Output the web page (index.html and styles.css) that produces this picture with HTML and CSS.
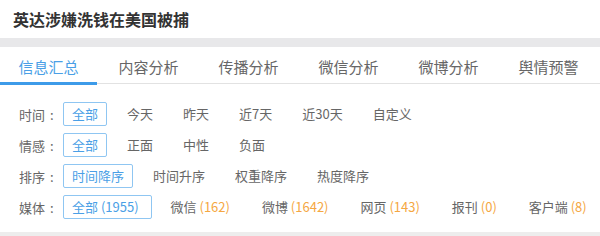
FILE: index.html
```html
<!DOCTYPE html>
<html lang="zh-CN">
<head>
<meta charset="utf-8">
<title>英达涉嫌洗钱在美国被捕</title>
<link rel="stylesheet" href="styles.css">
</head>
<body>
<div class="page">
  <header class="header">英达涉嫌洗钱在美国被捕</header>
  <div class="divider"></div>
  <nav class="tabs">
    <div class="tab active">信息汇总</div>
    <div class="tab">内容分析</div>
    <div class="tab">传播分析</div>
    <div class="tab">微信分析</div>
    <div class="tab">微博分析</div>
    <div class="tab">舆情预警</div>
  </nav>
  <section class="filters">
    <div class="row">
      <span class="label">时间<span class="colon">:</span></span>
      <span class="opt selected">全部</span>
      <span class="opt">今天</span>
      <span class="opt">昨天</span>
      <span class="opt">近7天</span>
      <span class="opt">近30天</span>
      <span class="opt">自定义</span>
    </div>
    <div class="row">
      <span class="label">情感<span class="colon">:</span></span>
      <span class="opt selected">全部</span>
      <span class="opt">正面</span>
      <span class="opt">中性</span>
      <span class="opt">负面</span>
    </div>
    <div class="row">
      <span class="label">排序<span class="colon">:</span></span>
      <span class="opt selected">时间降序</span>
      <span class="opt">时间升序</span>
      <span class="opt">权重降序</span>
      <span class="opt">热度降序</span>
    </div>
    <div class="row media">
      <span class="label">媒体<span class="colon">:</span></span>
      <span class="opt selected wide">全部 (1955)</span>
      <span class="opt">微信 <span class="count">(162)</span></span>
      <span class="opt">微博 <span class="count">(1642)</span></span>
      <span class="opt">网页 <span class="count">(143)</span></span>
      <span class="opt">报刊 <span class="count">(0)</span></span>
      <span class="opt">客户端 <span class="count">(8)</span></span>
    </div>
  </section>
  <div class="bottom-bar"></div>
</div>
</body>
</html>
```
FILE: styles.css
```css
* { box-sizing: border-box; }
html, body {
  margin: 0;
  padding: 0;
  background: #ffffff;
}
body {
  font-family: "Noto Sans CJK SC", "Noto Sans", sans-serif;
  color: #666;
  width: 600px;
  height: 236px;
  overflow: hidden;
}
.header {
  height: 38px;
  line-height: 38px;
  padding-left: 13px;
  font-size: 16px;
  font-weight: bold;
  color: #333;
}
.divider {
  height: 9px;
  background: #e8e8ea;
}
.tabs {
  display: flex;
  height: 37px;
  border-bottom: 1px solid #e2e2e2;
}
.tab {
  width: 97px;
  margin-right: 3px;
  height: 38px;
  padding-top: 10px;
  line-height: 20px;
  font-size: 15px;
  text-align: center;
  color: #666;
  border-bottom: 3px solid transparent;
  flex-shrink: 0;
}
.tab.active {
  color: #4a9fe6;
  border-bottom-color: #3d9be9;
}
.filters {
  padding: 18px 0 13px 0;
  display: flex;
  flex-direction: column;
  gap: 7px;
}
.row {
  display: flex;
  align-items: center;
  height: 24px;
  font-size: 13px;
}
.label {
  padding-left: 19px;
  width: 63px;
  color: #666;
  white-space: nowrap;
}
.colon {
  padding-left: 5px;
}
.opt {
  height: 24px;
  line-height: 22px;
  padding: 0 10px;
  margin-left: 8px;
  color: #666;
  white-space: nowrap;
  border: 1px solid transparent;
  border-radius: 2px;
}
.opt.selected {
  margin-left: 0;
  padding: 0 8px;
  border-color: #8fc6f2;
  color: #4a9fe6;
}
.opt.wide {
  padding-right: 12px;
}
.opt.selected + .opt {
  margin-left: 9px;
}
.row.media .opt {
  margin-left: 10px;
}
.row.media .opt.selected {
  margin-left: 0;
}
.row.media .opt.wide + .opt {
  margin-left: 8px;
}
.count {
  color: #f5a742;
}
.bottom-bar {
  height: 4px;
  background: #ededed;
}
```
